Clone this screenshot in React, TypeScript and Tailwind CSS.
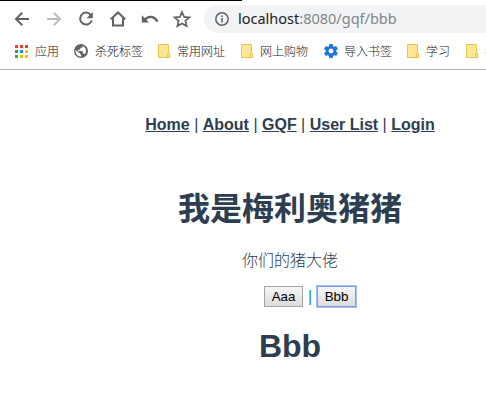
import type { ReactNode } from 'react';

function Tool({ children, faded = false }: { children: ReactNode; faded?: boolean }) {
  return (
    <svg
      viewBox="0 0 20 20"
      className={`h-5 w-5 shrink-0 ${faded ? 'text-[#babcbe]' : 'text-[#5f6368]'}`}
      fill="none"
      stroke="currentColor"
      strokeWidth="2"
    >
      {children}
    </svg>
  );
}

function Folder() {
  return (
    <svg viewBox="0 0 13 14" className="h-3.5 w-[13px] shrink-0">
      <path d="M.5.5h10v9h1.3v4H.5z" fill="#ffe694" stroke="#e8c34d" />
      <path d="M9.5 13V9.5h1" fill="none" stroke="#e8c34d" />
    </svg>
  );
}

function Apps() {
  const colors = ['#ea4335', '#ea4335', '#ea4335', '#34a853', '#1a88f0', '#fbbc05', '#34a853', '#fbbc05', '#fbbc05'];
  return (
    <svg viewBox="0 0 13 13" className="h-[13px] w-[13px] shrink-0">
      {colors.map((color, i) => (
        <rect key={i} x={(i % 3) * 5} y={Math.floor(i / 3) * 5} width="3" height="3" fill={color} />
      ))}
    </svg>
  );
}

function Globe() {
  return (
    <svg viewBox="0 0 14 14" className="h-3.5 w-3.5 shrink-0">
      <circle cx="7" cy="7" r="7" fill="#5f6368" />
      <path d="M1.5 6.1 5 8.4q1.2.5 1.2 1.5l1 .6v2.1A5.6 5.6 0 0 1 1.5 6.1ZM8.8 1.8v.7q0 1.2-1.2 1.2H6.3v1.2q0 .8-.9.8H4.2v1.2H8q.8 0 .8.8v1.8h.8q.9 0 1.2.8a5.6 5.6 0 0 0-2-8.5Z" fill="#fff" />
    </svg>
  );
}

function Gear() {
  return (
    <svg viewBox="2 2 20 20" className="h-3.5 w-3.5 shrink-0" fill="#1a73e8">
      <path d="M19.43 12.98c.04-.32.07-.64.07-.98s-.03-.66-.07-.98l2.11-1.65c.19-.15.24-.42.12-.64l-2-3.46c-.12-.22-.39-.3-.61-.22l-2.49 1a7 7 0 0 0-1.69-.98l-.38-2.65A.49.49 0 0 0 14 2h-4c-.25 0-.46.18-.49.42l-.38 2.65c-.61.25-1.17.59-1.69.98l-2.49-1c-.23-.09-.49 0-.61.22l-2 3.46c-.13.22-.07.49.12.64l2.11 1.65c-.04.32-.07.65-.07.98s.03.66.07.98l-2.11 1.65c-.19.15-.24.42-.12.64l2 3.46c.12.22.39.3.61.22l2.49-1c.52.4 1.08.73 1.69.98l.38 2.65c.03.24.24.42.49.42h4c.25 0 .46-.18.49-.42l.38-2.65c.61-.25 1.17-.59 1.69-.98l2.49 1c.23.09.49 0 .61-.22l2-3.46a.5.5 0 0 0-.12-.64zM12 15.5a3.5 3.5 0 1 1 0-7 3.5 3.5 0 0 1 0 7" />
    </svg>
  );
}

function Bookmark({ icon, label, className }: { icon: ReactNode; label: string; className: string }) {
  return (
    <div className={`flex shrink-0 items-center ${className}`}>
      {icon}
      <span className="whitespace-nowrap">{label}</span>
    </div>
  );
}

function Browser() {
  return (
    <header className="h-[70px] border-b border-[#b6b6b6]">
      <div className="h-px w-[242px] bg-black" />
      <div className="flex h-9 items-center pl-3">
        <div className="flex shrink-0 gap-3">
          <Tool><path d="M17 10H4.2M10.2 3.8 4 10l6.2 6.2" /></Tool>
          <Tool faded><path d="M3 10h12.8M9.8 3.8 16 10l-6.2 6.2" /></Tool>
          <Tool>
            <path d="M15.2 6.4A6 6 0 1 0 15.8 11.5" />
            <path d="M16.8 3v6.2h-6.2z" fill="currentColor" stroke="none" />
          </Tool>
          <Tool><path d="M2.8 10.3 10 3.5l7.2 6.8M5 9v7.5h10V9" /></Tool>
          <Tool>
            <path strokeWidth="2.3" d="M4.5 11C8.5 6.3 14 7 17.5 12.6" />
            <path d="M1.8 6.2v7.2H9z" fill="currentColor" stroke="none" />
          </Tool>
          <Tool><path strokeWidth="1.7" d="m10 3 2.1 4.9 5.3.5-4 3.5 1.2 5.2-4.6-2.7-4.6 2.7 1.2-5.2-4-3.5 5.3-.5z" /></Tool>
        </div>
        <div className="ml-3 flex h-7 flex-1 items-center rounded-l-full bg-[#f1f3f4] pl-[11px]">
          <svg viewBox="0 0 14 14" className="h-3.5 w-3.5 shrink-0" fill="none" stroke="#5f6368" strokeWidth="1.5">
            <circle cx="7" cy="7" r="6.2" />
            <path d="M7 6v4.5M7 3.4V5" />
          </svg>
          <span className="ml-[9px] whitespace-nowrap font-['Noto_Sans',sans-serif] text-[14.5px] text-[#80868b]"><span className="text-[#202124]">localhost</span>:8080/gqf/bbb</span>
        </div>
      </div>
      <nav className="flex h-7 items-center overflow-hidden pl-[15px] font-['Noto_Sans_CJK_SC',sans-serif] text-xs font-light text-[#202124]">
        <Bookmark icon={<Apps />} label="应用" className="w-[59px] gap-[7px]" />
        <Bookmark icon={<Globe />} label="杀死标签" className="w-[84px] gap-[7px]" />
        <Bookmark icon={<Folder />} label="常用网址" className="w-[83px] gap-1.5" />
        <Bookmark icon={<Folder />} label="网上购物" className="w-[83px] gap-1.5" />
        <Bookmark icon={<Gear />} label="导入书签" className="w-[83px] gap-[6px]" />
        <Bookmark icon={<Folder />} label="学习" className="w-[59px] gap-1.5" />
        <Bookmark icon={<Folder />} label="考" className="gap-1.5" />
      </nav>
    </header>
  );
}

const links = ['Home', 'About', 'GQF', 'User List', 'Login'];

export default function App() {
  return (
    <div className="h-[404px] w-[486px] overflow-hidden bg-white">
      <Browser />
      <main className="w-[580px] text-center font-['Liberation_Sans','Noto_Sans_CJK_SC',sans-serif] text-base text-[#2c3e50]">
        <div className="pt-[46px] leading-[18px]">
          {links.map((link, i) => (
            <span key={link}>
              {i > 0 && ' | '}
              <a className="font-bold underline">{link}</a>
            </span>
          ))}
        </div>
        <h1 className="mt-[54px] text-[32px] font-bold leading-[42px]">我是梅利奥猪猪</h1>
        <p className="mt-5 font-light leading-[21px]">你们的猪大佬</p>
        <div className="mt-[15px] flex h-[21px] items-center justify-center pl-10">
          <button className="h-[21px] w-[39px] border border-[#a5a5a5] bg-linear-to-b from-[#f6f6f6] to-[#dddddd] text-[13.333px] leading-[18px] text-black">Aaa</button>
          <span className="w-3.5 leading-[18px] text-[#2384b8]">|</span>
          <button className="h-[21px] w-[39px] border border-[#7b9fda] bg-linear-to-b from-[#f6f6f6] to-[#dddddd] text-[13.333px] leading-[18px] text-black shadow-[0_0_0_1px_#a3c1f7]">Bbb</button>
        </div>
        <h1 className="mt-[21px] text-[32px] font-bold leading-[37px]">Bbb</h1>
      </main>
    </div>
  );
}
